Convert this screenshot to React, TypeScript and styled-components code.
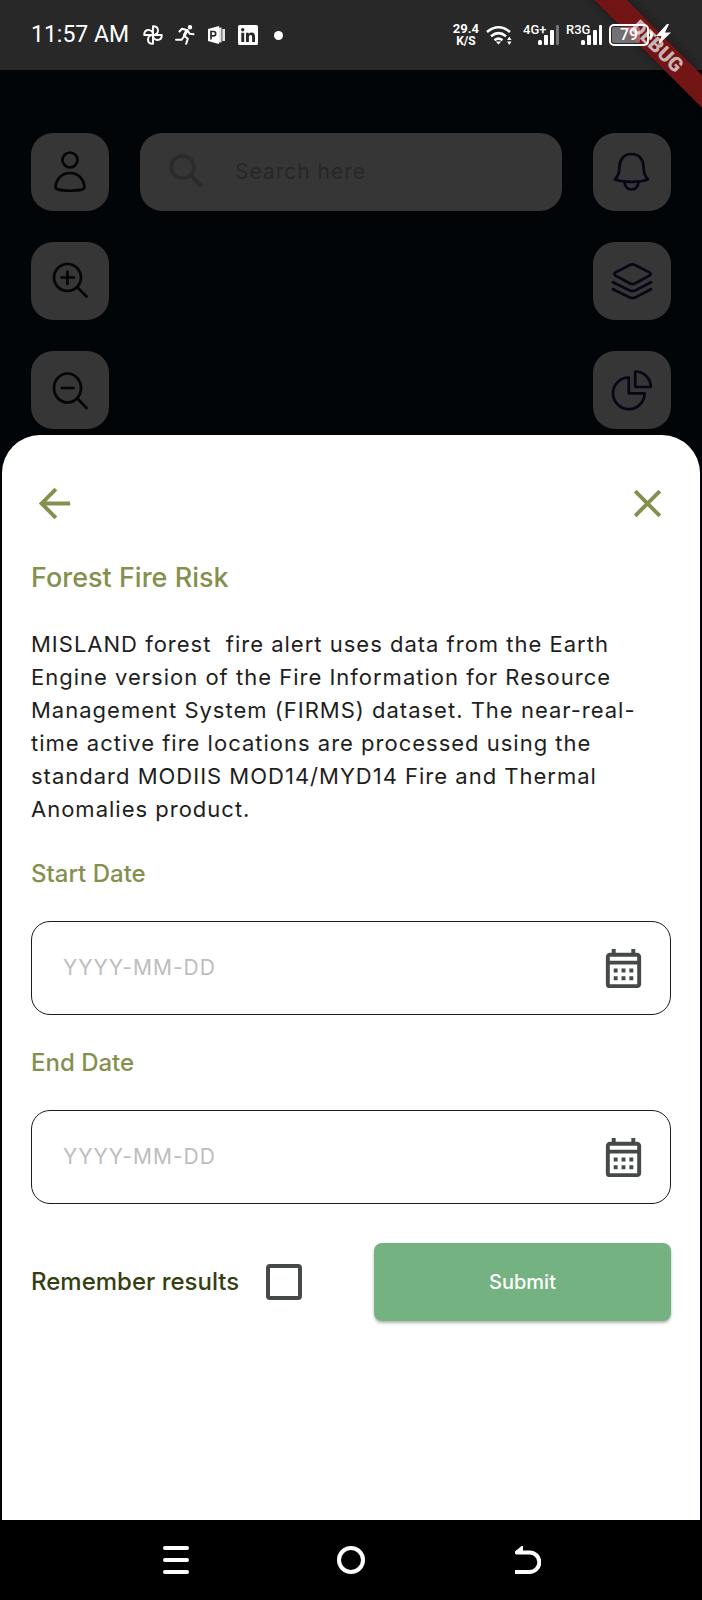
import React from "react";
import styled, { createGlobalStyle } from "styled-components";
import { MdArrowBack, MdClose, MdOutlineCalendarMonth } from "react-icons/md";

const GlobalStyle = createGlobalStyle`
  *, *::before, *::after { box-sizing: border-box; }
  body { margin: 0; background: #000; font-family: Inter, "Open Sans", sans-serif; }
  button, input { font: inherit; }
  h1, p { margin: 0; }
  svg { display: block; flex: none; }
`;

const Screen = styled.div`
  position: relative;
  display: flex;
  flex-direction: column;
  min-height: 100vh;
  overflow: hidden;
  background: #010508;
`;

const StatusBar = styled.header`
  display: flex;
  align-items: center;
  justify-content: space-between;
  height: 70px;
  padding: 0 31px;
  background: #282828;
  color: #fff;
  font-family: Roboto, sans-serif;
`;

const StatusGroup = styled.div<{ $gap: number }>`
  position: relative;
  z-index: 1;
  display: flex;
  align-items: center;
  gap: ${(p) => p.$gap}px;
`;

const Clock = styled.time`
  margin-right: 2px;
  font-size: 23px;
  line-height: 28px;
`;

const Dot = styled.span`
  width: 9px;
  height: 9px;
  margin-left: 4px;
  border-radius: 50%;
  background: #fff;
`;

const Speed = styled.div`
  font-size: 12px;
  line-height: 13px;
  font-weight: 700;
  text-align: center;
`;

const SpeedValue = styled.div`
  font-size: 13px;
`;

const Signal = styled.div`
  position: relative;
`;

const SignalLabel = styled.span`
  position: absolute;
  top: -2px;
  left: 0;
  font-size: 13px;
  line-height: 16px;
  font-weight: 500;
`;

const Battery = styled.div`
  position: relative;
`;

const BatteryLevel = styled.span`
  position: absolute;
  top: 0;
  left: 0;
  width: 40px;
  font-size: 16px;
  line-height: 22px;
  font-weight: 500;
  text-align: center;
`;

const Ribbon = styled.div`
  position: absolute;
  top: 35px;
  right: -55px;
  width: 200px;
  height: 23px;
  transform: rotate(45deg);
  background: #731415;
  box-shadow: 0 0 8px rgba(0, 0, 0, 0.4);
  color: #c9b3b3;
  font: 900 20px/23px Roboto, sans-serif;
  text-align: center;
`;

const MapArea = styled.main`
  display: grid;
  grid-template-columns: 78px minmax(0, 1fr) 78px;
  gap: 31px;
  padding: 63px 31px 6px;
`;

const ToolColumn = styled.div`
  display: flex;
  flex-direction: column;
  gap: 31px;
`;

const ToolButton = styled.button<{ $ink: string }>`
  width: 78px;
  height: 78px;
  padding: 0;
  border: 0;
  border-radius: 22px;
  background: #363636;
  color: ${(p) => p.$ink};
`;

const SearchBox = styled.label`
  display: flex;
  align-items: center;
  gap: 24px;
  height: 78px;
  padding: 0 24px;
  border-radius: 22px;
  background: #363636;
  color: #292929;
`;

const SearchInput = styled.input`
  flex: 1;
  min-width: 0;
  padding: 0;
  border: 0;
  outline: 0;
  background: none;
  font-size: 21px;
  line-height: 28px;
  letter-spacing: 1px;
  color: #222;
  &::placeholder { color: #272727; opacity: 1; }
`;

const Sheet = styled.section`
  flex: 1;
  margin: 0 2px;
  padding: 44px 29px 39px;
  border-radius: 38px 38px 0 0;
  background: #fff;
`;

const SheetBar = styled.div`
  display: flex;
  justify-content: space-between;
  margin-bottom: 34px;
`;

const IconButton = styled.button<{ $ink: string }>`
  display: grid;
  place-items: center;
  width: 47px;
  height: 48px;
  padding: 0;
  border: 0;
  background: none;
  color: ${(p) => p.$ink};
`;

const Title = styled.h1`
  margin-bottom: 33px;
  font-size: 27px;
  line-height: 34px;
  font-weight: 500;
  color: #84914e;
`;

const Description = styled.p`
  margin-bottom: 34px;
  font-size: 22px;
  line-height: 33px;
  letter-spacing: 1px;
  white-space: pre-wrap;
  color: #1e1e1e;
`;

const Field = styled.div`
  display: flex;
  flex-direction: column;
  gap: 33px;
  margin-bottom: 34px;
`;

const FieldLabel = styled.label`
  font-size: 24px;
  line-height: 28px;
  font-weight: 500;
  color: #84914e;
`;

const DateBox = styled.div`
  display: flex;
  align-items: center;
  height: 94px;
  padding: 0 23px 0 31px;
  border: 1px solid #1c1c1c;
  border-radius: 19px;
`;

const DateInput = styled.input`
  flex: 1;
  min-width: 0;
  padding: 0;
  border: 0;
  outline: 0;
  background: none;
  font-size: 21px;
  line-height: 28px;
  letter-spacing: 1px;
  color: #1e1e1e;
  &::placeholder { color: #bdbdbd; opacity: 1; }
`;

const Actions = styled.div`
  display: flex;
  align-items: center;
  justify-content: space-between;
  padding-top: 5px;
`;

const Remember = styled.label`
  display: flex;
  align-items: center;
  gap: 27px;
  font-size: 24px;
  line-height: 28px;
  font-weight: 500;
  color: #353f12;
`;

const Checkbox = styled.input`
  appearance: none;
  width: 36px;
  height: 36px;
  margin: 0;
  border: 4px solid #454a46;
  border-radius: 4px;
  &:checked { background: #454a46; }
`;

const Submit = styled.button`
  width: 297px;
  height: 78px;
  border: 0;
  border-radius: 8px;
  background: #74b281;
  box-shadow: 0 2px 3px rgba(0, 0, 0, 0.3);
  color: #fff;
  font-size: 20px;
  font-weight: 500;
`;

const NavBar = styled.nav`
  display: grid;
  grid-template-columns: repeat(3, 1fr);
  justify-items: center;
  align-items: center;
  height: 80px;
  padding: 0 12.5%;
  background: #000;
`;

const dark = "#050507";
const navy = "#080616";
const olive = "#84914e";

type ToolKind = "person" | "zoomIn" | "zoomOut" | "bell" | "layers" | "pie";

const toolShapes: Record<ToolKind, React.ReactNode> = {
  person: (
    <>
      <circle cx="39" cy="27" r="7.5" />
      <path d="M24.5 54.5C25 46 31 40 39 40s14 6 14.500 14.500C53.500 58.800 24.500 58.800 24.500 54.500Z" />
    </>
  ),
  zoomIn: (
    <>
      <circle cx="36.500" cy="35.500" r="13.500" />
      <path d="M46.500 45.500 55.500 54.500M36.500 29.500v12.500M30.500 35.500h12.500" />
    </>
  ),
  zoomOut: (
    <>
      <ellipse cx="36.500" cy="37" rx="13.500" ry="14.500" />
      <path d="M46.500 47.500 55.500 57M31 37h11.500" />
    </>
  ),
  bell: (
    <>
      <path d="M38.500 21c-7.500 0-11.800 5.500-12 12.500-.1 6-1 9.500-4.500 13 4 1.500 9.500 2.300 16.500 2.300s12.500-.8 16.500-2.300c-3.500-3.500-4.400-7-4.500-13-.2-7-4.500-12.500-12-12.500Z" />
      <path d="M31.500 49.500c.8 4.500 3.400 7 7 7s6.200-2.500 7-7" />
    </>
  ),
  layers: (
    <>
      <path d="M37.500 22.800 22.600 30.400q-2.600 1.600 0 3.200L37 41.500q2.500 1.200 5 0l14.400-7.900q2.600-1.600 0-3.200L41.500 22.800q-2-.9-4 0Z" />
      <path d="M20 40.200l17 8.400q2.500 1 5 0l16-8.400M20 47.200l17 8.400q2.500 1 5 0l16-8.400" />
    </>
  ),
  pie: (
    <>
      <path d="M35.800 26.500v15.800h15.800A15.800 15.800 0 1 1 35.800 26.500Z" />
      <path d="M42.200 20.500v15.500h15.600A15.600 15.600 0 0 0 42.200 20.500Z" />
    </>
  ),
};

function Tool({ kind, label, ink }: { kind: ToolKind; label: string; ink: string }) {
  return (
    <ToolButton type="button" aria-label={label} $ink={ink}>
      <svg width="78" height="78" fill="none" stroke="currentColor" strokeWidth="2.700" strokeLinecap="round" strokeLinejoin="round">
        {toolShapes[kind]}
      </svg>
    </ToolButton>
  );
}

function SignalBars({ label, weak }: { label: string; weak?: boolean }) {
  return (
    <Signal>
      <SignalLabel>{label}</SignalLabel>
      <svg width="36" height="22" fill="#fff">
        <rect x="15" y="16" width="4" height="5" rx="1.500" />
        <rect x="21" y="11" width="4" height="10" rx="1" />
        <rect x="27" y="6" width="4" height="15" rx="1" />
        <rect x="33" y="1" width="3" height="20" rx="1" fillOpacity={weak ? 0.35 : 1} />
      </svg>
    </Signal>
  );
}

function DateField({ id, label }: { id: string; label: string }) {
  return (
    <Field>
      <FieldLabel htmlFor={id}>{label}</FieldLabel>
      <DateBox>
        <DateInput id={id} type="text" placeholder="YYYY-MM-DD" />
        <IconButton type="button" aria-label={`Choose ${label}`} $ink="#454a46">
          <MdOutlineCalendarMonth size={47} />
        </IconButton>
      </DateBox>
    </Field>
  );
}

export default function App() {
  return (
    <>
      <GlobalStyle />
      <Screen>
        <StatusBar>
          <StatusGroup $gap={12}>
            <Clock>11:57 AM</Clock>
            <svg width="20" height="20" viewBox="0 0 20 20" fill="none" stroke="#fff" strokeWidth="1.900" strokeLinejoin="round">
              <path d="M10 10V1.200c3.500 0 5 2 5 4.400S13 10 10 10Z" />
              <path d="M10 10h8.800c0 3.500-2 5-4.400 5S10 13 10 10Z" />
              <path d="M10 10v8.800c-3.500 0-5-2-5-4.400S7 10 10 10Z" />
              <path d="M10 10H1.200c0-3.500 2-5 4.400-5S10 7 10 10Z" />
            </svg>
            <svg width="20" height="20" viewBox="0 0 20 20" fill="none" stroke="#fff" strokeWidth="2" strokeLinecap="round" strokeLinejoin="round">
              <circle cx="15" cy="2.200" r="1.200" fill="#fff" />
              <path d="M4.500 6.500 7 3.800l5.500 1.400-3.300 5.600 3.600 3-1.600 5M12.500 5.200l2.200 3.600 3.800.4M9 11.500l-2.500 3.300H1" />
              <path d="M11.800 5.500 9.500 10" strokeWidth="3" />
            </svg>
            <svg width="19" height="18" viewBox="0 0 19 18">
              <path d="M1 3 12 0v18L1 15Z" fill="#fff" />
              <path d="M12 1.500h2.500v15H12ZM15.300 3h2.700v12h-2.700Z" fill="#e4e4e4" />
              <path d="M4 13.500V5.500h2.500a2.200 2.200 0 0 1 0 4.400H4.500" fill="none" stroke="#282828" strokeWidth="1.700" />
            </svg>
            <svg width="20" height="20" viewBox="0 0 20 20">
              <rect width="20" height="20" rx="1.500" fill="#fff" />
              <circle cx="4.700" cy="4.800" r="1.700" fill="#282828" />
              <path d="M3.300 7.700h2.900V17H3.300ZM8 7.700h2.700v1.300c.6-1 1.600-1.500 2.900-1.500 2.700 0 3.400 1.700 3.400 4.200V17h-2.900v-4.700c0-1.400-.2-2.400-1.500-2.400s-1.700 1-1.700 2.400V17H8Z" fill="#282828" />
            </svg>
            <Dot />
          </StatusGroup>
          <StatusGroup $gap={7}>
            <Speed>
              <SpeedValue>29.4</SpeedValue>
              <div>K/S</div>
            </Speed>
            <svg width="30" height="22" viewBox="0 0 30 22" fill="none" stroke="#fff" strokeWidth="2.500">
              <path d="M1 8Q12.500-1.500 24 8M5 12.200Q12.500 6 20 12.200M8.500 16.200Q12.500 13 16.500 16.200" />
              <path d="M9.800 17.500h5.400L12.500 20.500Z" fill="#fff" stroke="none" />
              <path d="M23.300 12.500 25.500 16h-4.400ZM23.300 21l2.200-3.500h-4.400Z" fill="#fff" stroke="none" />
            </svg>
            <SignalBars label="4G+" weak />
            <SignalBars label="R3G" />
            <Battery>
              <svg width="62" height="22" viewBox="0 0 62 22">
                <rect x="1" y="1" width="38" height="20" rx="4" fill="none" stroke="#fff" strokeWidth="2" />
                <rect x="3" y="3" width="28" height="16" rx="2" fill="#fff" fillOpacity=".35" />
                <path d="M41 7c4 0 4 8 0 8Z" fill="#fff" />
                <path d="m58 0-11 12h5.500l-3.500 9 13-12.500h-6l4-8.500Z" fill="#fff" />
              </svg>
              <BatteryLevel>79</BatteryLevel>
            </Battery>
          </StatusGroup>
        </StatusBar>
        <Ribbon>DEBUG</Ribbon>

        <MapArea>
          <ToolColumn>
            <Tool kind="person" label="Profile" ink={dark} />
            <Tool kind="zoomIn" label="Zoom in" ink={dark} />
            <Tool kind="zoomOut" label="Zoom out" ink={dark} />
          </ToolColumn>
          <SearchBox>
            <svg width="47" height="47" viewBox="0 0 47 47" fill="none" stroke="#2b2b2b" strokeWidth="3.500">
              <circle cx="18.500" cy="18" r="11.300" />
              <path d="M26.500 26 37.500 37" strokeWidth="4" />
            </svg>
            <SearchInput type="text" placeholder="Search here" aria-label="Search here" />
          </SearchBox>
          <ToolColumn>
            <Tool kind="bell" label="Notifications" ink={navy} />
            <Tool kind="layers" label="Layers" ink={navy} />
            <Tool kind="pie" label="Statistics" ink={navy} />
          </ToolColumn>
        </MapArea>

        <Sheet>
          <SheetBar>
            <IconButton type="button" aria-label="Back" $ink={olive}>
              <MdArrowBack size={47} />
            </IconButton>
            <IconButton type="button" aria-label="Close" $ink={olive}>
              <MdClose size={47} />
            </IconButton>
          </SheetBar>
          <Title>Forest Fire Risk</Title>
          <Description>
            {"MISLAND forest  fire alert uses data from the Earth Engine version of the Fire Information for Resource Management System (FIRMS) dataset. The near-real-time active fire locations are processed using the standard MODIIS MOD14/MYD14 Fire and Thermal Anomalies product."}
          </Description>
          <DateField id="start-date" label="Start Date" />
          <DateField id="end-date" label="End Date" />
          <Actions>
            <Remember>
              Remember results
              <Checkbox type="checkbox" />
            </Remember>
            <Submit type="button">Submit</Submit>
          </Actions>
        </Sheet>

        <NavBar>
          <IconButton type="button" aria-label="Recent apps" $ink="#fff">
            <svg width="28" height="28" fill="none" stroke="currentColor" strokeWidth="4" strokeLinecap="round">
              <path d="M3 2h22M3 14h22M3 26h22" />
            </svg>
          </IconButton>
          <IconButton type="button" aria-label="Home" $ink="#fff">
            <svg width="28" height="28" fill="none" stroke="currentColor" strokeWidth="4">
              <circle cx="14" cy="14" r="12" />
            </svg>
          </IconButton>
          <IconButton type="button" aria-label="Go back" $ink="#fff">
            <svg width="28" height="28" fill="none" stroke="currentColor" strokeWidth="4">
              <path d="M2 26h14.500a9.800 9.800 0 0 0 0-19.600H3" />
              <path d="M10 0v5H7v3H2V5.500L8.500 0Z" fill="currentColor" stroke="none" />
            </svg>
          </IconButton>
        </NavBar>
      </Screen>
    </>
  );
}
